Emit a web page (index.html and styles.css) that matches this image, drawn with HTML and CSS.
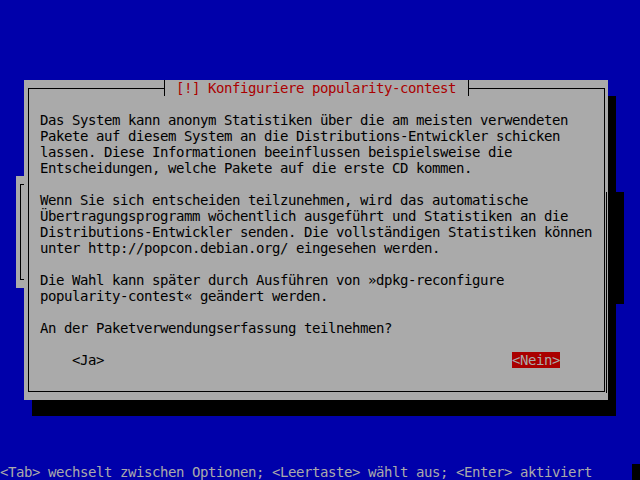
FILE: index.html
```html
<!DOCTYPE html>
<html lang="de">
<head>
<meta charset="utf-8">
<title>Konfiguriere popularity-contest</title>
<link rel="stylesheet" href="styles.css">
</head>
<body>
<div class="screen">
  <div class="window window-back">
    <div class="frame"></div>
  </div>

  <div class="window window-front">
    <div class="frame">
      <div class="content">
        <p class="para">Das System kann anonym Statistiken über die am meisten verwendeten
Pakete auf diesem System an die Distributions-Entwickler schicken
lassen. Diese Informationen beeinflussen beispielsweise die
Entscheidungen, welche Pakete auf die erste CD kommen.</p>
        <p class="para">Wenn Sie sich entscheiden teilzunehmen, wird das automatische
Übertragungsprogramm wöchentlich ausgeführt und Statistiken an die
Distributions-Entwickler senden. Die vollständigen Statistiken können
unter http://popcon.debian.org/ eingesehen werden.</p>
        <p class="para">Die Wahl kann später durch Ausführen von »dpkg-reconfigure
popularity-contest« geändert werden.</p>
        <p class="para">An der Paketverwendungserfassung teilnehmen?</p>
      </div>
      <div class="buttons">
        <span class="button">&lt;Ja&gt;</span>
        <span class="button button-active">&lt;Nein&gt;</span>
      </div>
    </div>
    <div class="edge-line"></div>
    <div class="title"><span class="tee tee-left"></span><span class="title-text"> [!] Konfiguriere popularity-contest </span><span class="tee tee-right"></span></div>
  </div>

  <div class="status"><span class="status-text">&lt;Tab&gt; wechselt zwischen Optionen; &lt;Leertaste&gt; wählt aus; &lt;Enter&gt; aktiviert</span><span class="cursor"></span></div>
</div>
</body>
</html>
```

FILE: styles.css
```css
html, body {
  margin: 0;
  padding: 0;
  background: #0000aa;
}

.screen {
  position: relative;
  width: 640px;
  height: 480px;
  overflow: hidden;
  background: #0000aa;
  display: flex;
  flex-direction: column;
  justify-content: flex-end;
  font-family: "DejaVu Sans Mono", monospace;
  font-size: 14px;
  letter-spacing: -0.4287px;
  line-height: 16px;
  color: #000;
}

.window {
  position: absolute;
  background: #aaaaaa;
  box-shadow: 8px 16px 0 0 #000;
  box-sizing: border-box;
  padding: 8px 3px 8px 4px;
  display: flex;
}

.window-back {
  left: 16px;
  top: 176px;
  width: 600px;
  height: 112px;
}

.window-front {
  left: 24px;
  top: 80px;
  width: 584px;
  height: 320px;
}

.frame {
  flex: 1;
  border: 1px solid #000;
  display: flex;
  flex-direction: column;
}

.content {
  padding: 23px 0 0 11px;
}

.para {
  margin: 0 0 16px 0;
  white-space: pre;
}

.buttons {
  display: flex;
  justify-content: space-between;
  padding: 0 44px 0 43px;
}

.button {
  white-space: pre;
}

.button-active {
  background: #aa0000;
  color: #aaaaaa;
}

.edge-line {
  position: absolute;
  left: 582px;
  top: 112px;
  width: 1px;
  height: 201px;
  background: #000;
}

.title {
  position: absolute;
  left: 136px;
  top: 0;
  height: 16px;
  display: flex;
  background: #aaaaaa;
  color: #aa0000;
}

.title-text {
  white-space: pre;
}

.tee {
  position: relative;
  width: 8px;
  height: 16px;
}

.tee::before {
  content: "";
  position: absolute;
  left: 4px;
  top: 0;
  width: 1px;
  height: 16px;
  background: #000;
}

.tee::after {
  content: "";
  position: absolute;
  top: 8px;
  height: 1px;
  width: 4px;
  background: #000;
}

.tee-left::after {
  left: 0;
}

.tee-right::after {
  left: 5px;
  width: 3px;
}

.status {
  height: 16px;
  display: flex;
  color: #aaaaaa;
}

.status-text {
  white-space: pre;
  width: 632px;
}

.cursor {
  width: 8px;
  height: 16px;
  background: #000;
}
```
